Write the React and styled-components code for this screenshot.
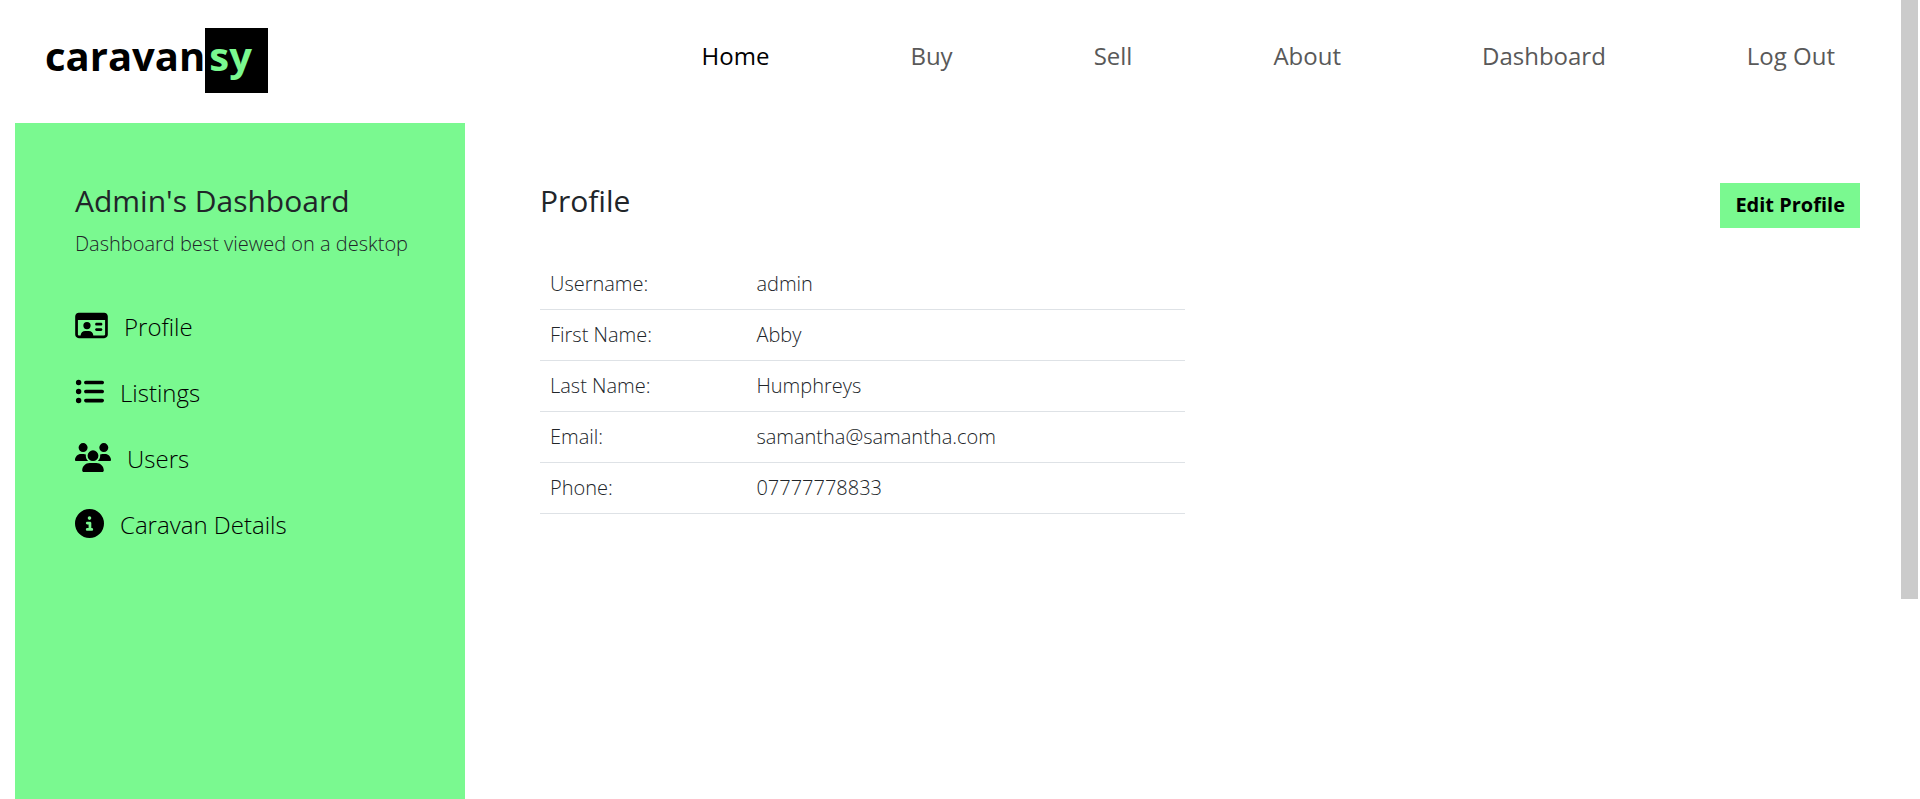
import React from "react";
import styled, { createGlobalStyle } from "styled-components";
import { FaRegIdCard, FaListUl, FaUsers, FaCircleInfo } from "react-icons/fa6";

const GREEN = "#7af990";

const GlobalStyle = createGlobalStyle`
  *, *::before, *::after { box-sizing: border-box; }
  body {
    margin: 0;
    background: #fff;
    color: #212529;
    font-family: "Open Sans", "Liberation Sans", sans-serif;
    font-size: 20px;
    font-weight: 300;
    line-height: 34px;
  }
  h1, h2, p, ul { margin: 0; padding: 0; }
  ul { list-style: none; }
  a { color: inherit; text-decoration: none; }
`;

const Page = styled.div`
  display: flex;
  flex-direction: column;
  min-height: 100vh;
  padding-right: 19px;
`;

const ScrollThumb = styled.div`
  position: fixed;
  top: 0;
  right: 2px;
  width: 17px;
  height: 75vh;
  background: #cbcbcb;
`;

const Header = styled.header`
  display: flex;
  align-items: flex-start;
  justify-content: space-between;
  padding: 28px 66px 30px 45px;
`;

const Logo = styled.a`
  display: flex;
  color: #000;
  font-size: 40px;
  font-weight: 700;
  line-height: 56px;
`;

const LogoMark = styled.span`
  padding: 0 16px 9px 4px;
  background: #000;
  color: ${GREEN};
`;

const NavList = styled.ul`
  display: flex;
  gap: 141px;
  padding-top: 11px;
`;

const NavLink = styled.a`
  color: ${(p) => (p.$active ? "#000" : "#595959")};
  font-size: 24px;
  font-weight: 400;
`;

const Content = styled.div`
  display: flex;
  flex: 1;
  padding-left: 15px;
`;

const Sidebar = styled.aside`
  flex: 0 0 450px;
  padding: 60px 40px 60px 60px;
  background: ${GREEN};
`;

const Title = styled.h2`
  font-size: 30px;
  font-weight: 500;
  line-height: 36px;
`;

const Note = styled.p`
  padding-top: 8px;
  white-space: nowrap;
`;

const Menu = styled.ul`
  display: flex;
  flex-direction: column;
  gap: 26px;
  padding-top: 46px;
`;

const MenuLink = styled.a`
  display: flex;
  gap: 16px;
  color: #000;
  font-size: 24px;
  line-height: 40px;

  svg {
    flex: none;
    width: ${(p) => p.$iconWidth}px;
    height: 29px;
    margin-top: 4px;
  }
`;

const Main = styled.main`
  flex: 1;
  padding: 60px 41px 60px 75px;
`;

const MainHead = styled.div`
  display: flex;
  align-items: flex-start;
  justify-content: space-between;
  padding-bottom: 31px;
`;

const EditButton = styled.button`
  padding: 0 15px 2px;
  border: 0;
  background: ${GREEN};
  color: #000;
  font: 700 20px/43px "Open Sans", "Liberation Sans", sans-serif;
  cursor: pointer;
`;

const Columns = styled.div`
  display: grid;
  grid-template-columns: 1fr 1fr;
  gap: 30px;
`;

const Details = styled.table`
  width: 100%;
  border-collapse: collapse;
  table-layout: fixed;

  th, td {
    padding: 8px 10px;
    border-bottom: 1px solid #dee2e6;
    font-weight: 300;
    text-align: left;
  }
  th { width: 32%; }
`;

const navItems = ["Home", "Buy", "Sell", "About", "Dashboard", "Log Out"];

const menuItems = [
  { label: "Profile", Icon: FaRegIdCard, iconWidth: 33 },
  { label: "Listings", Icon: FaListUl, iconWidth: 29 },
  { label: "Users", Icon: FaUsers, iconWidth: 36 },
  { label: "Caravan Details", Icon: FaCircleInfo, iconWidth: 29 },
];

const profile = [
  ["Username:", "admin"],
  ["First Name:", "Abby"],
  ["Last Name:", "Humphreys"],
  ["Email:", "samantha@samantha.com"],
  ["Phone:", "07777778833"],
];

export default function App() {
  return (
    <>
      <GlobalStyle />
      <Page>
        <Header>
          <Logo href="#home">
            caravan<LogoMark>sy</LogoMark>
          </Logo>
          <nav>
            <NavList>
              {navItems.map((item) => (
                <li key={item}>
                  <NavLink href="#" $active={item === "Home"}>{item}</NavLink>
                </li>
              ))}
            </NavList>
          </nav>
        </Header>
        <Content>
          <Sidebar>
            <Title>Admin's Dashboard</Title>
            <Note>Dashboard best viewed on a desktop</Note>
            <Menu>
              {menuItems.map(({ label, Icon, iconWidth }) => (
                <li key={label}>
                  <MenuLink href="#" $iconWidth={iconWidth}>
                    <Icon aria-hidden="true" />
                    {label}
                  </MenuLink>
                </li>
              ))}
            </Menu>
          </Sidebar>
          <Main>
            <MainHead>
              <Title>Profile</Title>
              <EditButton type="button">Edit Profile</EditButton>
            </MainHead>
            <Columns>
              <Details>
                <tbody>
                  {profile.map(([label, value]) => (
                    <tr key={label}>
                      <th scope="row">{label}</th>
                      <td>{value}</td>
                    </tr>
                  ))}
                </tbody>
              </Details>
            </Columns>
          </Main>
        </Content>
      </Page>
      <ScrollThumb />
    </>
  );
}
